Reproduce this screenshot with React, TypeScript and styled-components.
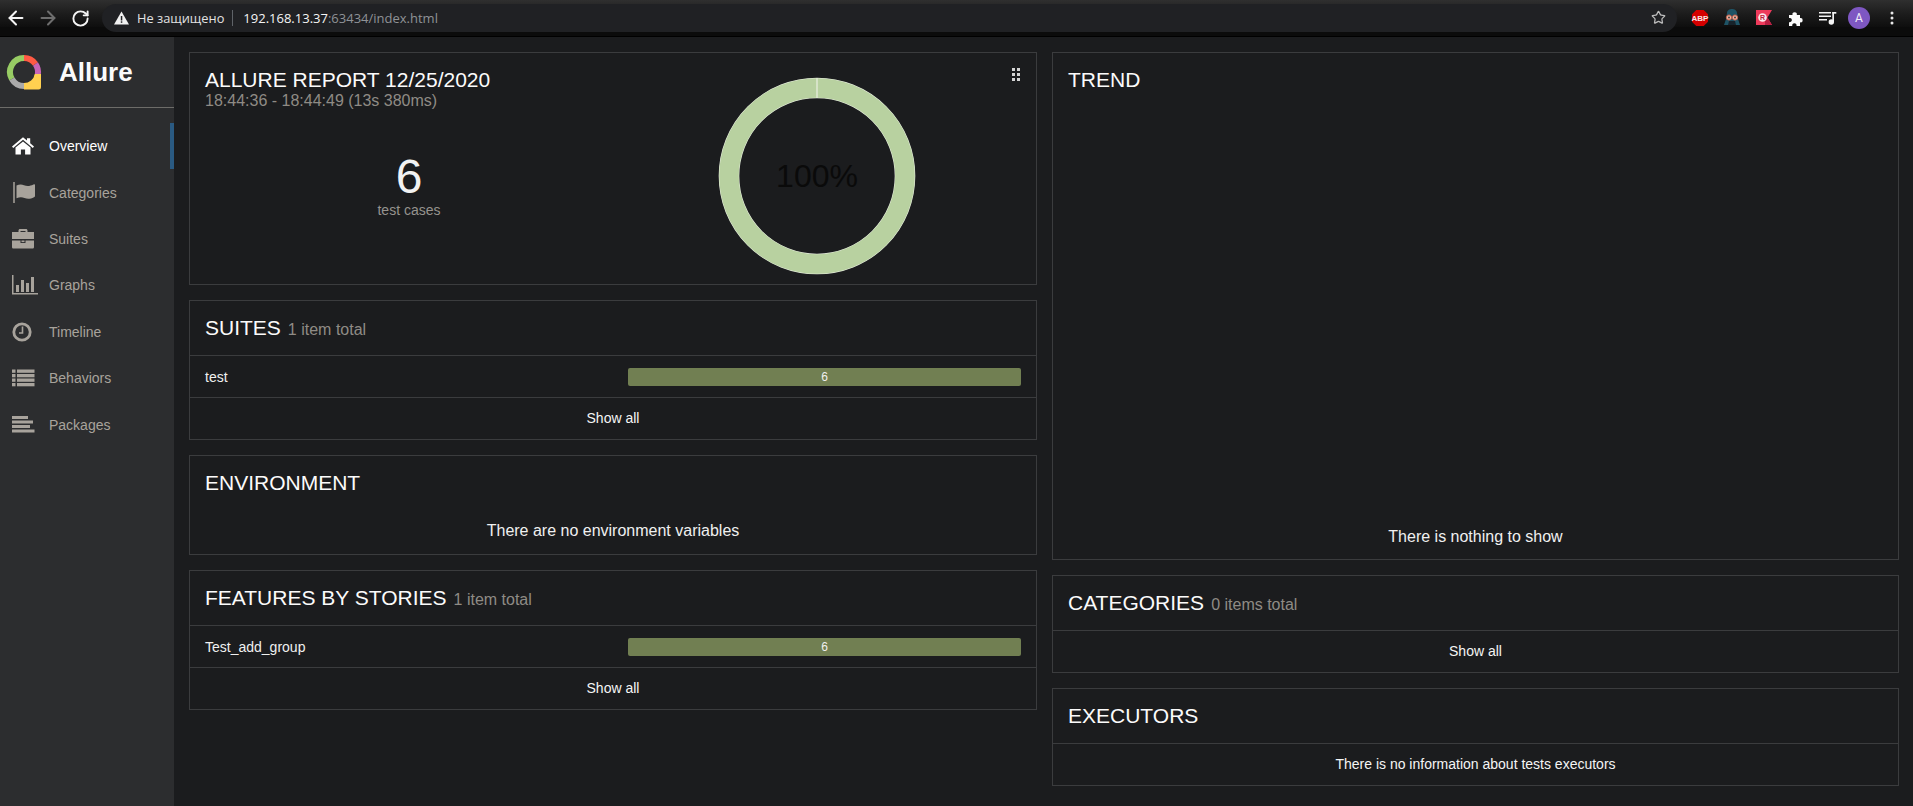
import React from "react";
import styled, { createGlobalStyle } from "styled-components";
import { ArrowLeft, ArrowRight, RotateCw, Star } from "lucide-react";

const Global = createGlobalStyle`
  html, body { margin: 0; padding: 0; height: 100%; background: #1b1c1e; overflow: hidden; }
  * { box-sizing: border-box; }
  #root { height: 100%; }
`;

const Page = styled.div`
  display: flex;
  flex-direction: column;
  height: 806px;
  font-family: "Liberation Sans", Arial, sans-serif;
  color: #f2f2f2;
  background: #1b1c1e;
`;

/* Browser chrome */
const BrowserBar = styled.div`
  display: flex;
  align-items: center;
  height: 37px;
  flex: none;
  padding-bottom: 1px;
  background: linear-gradient(#2f2f2f 0, #1c1c1c 14px, #0e0e0e 27px, #0b0b0b 27px, #0b0b0b 36px, #000 36px);
`;
const NavGroup = styled.div`
  display: flex;
  align-items: center;
  gap: 10px;
  padding-left: 5px;
  width: 102px;
  flex: none;
`;
const NavIcon = styled.span<{ $dim?: boolean }>`
  display: flex;
  width: 22px;
  justify-content: center;
  color: ${(p) => (p.$dim ? "#6e6e6e" : "#f4f4f4")};
`;
const Omnibox = styled.div`
  flex: 1;
  height: 28px;
  margin-top: -1px;
  display: flex;
  align-items: center;
  padding: 0 11px 0 12px;
  border-radius: 14px;
  background: #202124;
  font-family: "Open Sans", "Noto Sans", sans-serif;
  font-size: 13px;
`;
const Secure = styled.span`
  color: #e2e2e2;
  font-size: 12.8px;
  margin-left: 8px;
`;
const Divider = styled.span`
  width: 1px;
  height: 16px;
  background: #5f6368;
  margin: 0 10px 0 8px;
`;
const UrlHost = styled.span`
  color: #f5f5f5;
`;
const UrlRest = styled.span`
  color: #8f9296;
`;
const StarSlot = styled.span`
  margin-left: auto;
  display: flex;
  color: #bdbdbd;
`;
const Extensions = styled.div`
  width: 236px;
  flex: none;
  display: flex;
  align-items: center;
  height: 28px;
  padding-left: 11px;
  gap: 8px;
`;
const ExtSlot = styled.span`
  width: 24px;
  height: 24px;
  display: flex;
  align-items: center;
  justify-content: center;
  flex: none;
`;
const Avatar = styled.span`
  width: 22px;
  height: 22px;
  border-radius: 50%;
  background: #7e57c2;
  color: #f0ecf8;
  font-size: 12px;
  display: flex;
  align-items: center;
  justify-content: center;
  font-family: "Roboto", sans-serif;
  flex: none;
`;
const Kebab = styled.span`
  margin-left: 12px;
  display: flex;
`;

/* Layout */
const Body = styled.div`
  flex: 1;
  display: flex;
  min-height: 0;
`;
const Sidebar = styled.aside`
  width: 174px;
  flex: none;
  background: #2c2d2f;
`;
const Brand = styled.div`
  height: 71px;
  display: flex;
  align-items: center;
  padding-left: 6px;
  gap: 17px;
  border-bottom: 1px solid #6d6c69;
`;
const BrandName = styled.span`
  font-size: 26px;
  font-weight: 700;
  color: #fbfbfb;
`;
const Menu = styled.nav`
  padding-top: 15px;
  display: flex;
  flex-direction: column;
`;
const MenuItem = styled.div<{ $active?: boolean }>`
  height: 46.4px;
  display: flex;
  align-items: center;
  gap: 13px;
  padding-left: 12px;
  font-size: 14px;
  color: ${(p) => (p.$active ? "#ffffff" : "#a8a39c")};
  border-right: 4px solid ${(p) => (p.$active ? "#2a5a82" : "transparent")};
`;
const Content = styled.main`
  flex: 1;
  display: grid;
  grid-template-columns: 848px 847px;
  column-gap: 15px;
  padding: 15px 0 0 15px;
  align-items: start;
`;
const Column = styled.div`
  display: flex;
  flex-direction: column;
  gap: 15px;
`;
const Card = styled.section<{ $height?: number }>`
  position: relative;
  border: 1px solid #3b3c3e;
  ${(p) => (p.$height ? `height: ${p.$height}px;` : "")}
`;
const ReportCard = styled(Card)`
  display: grid;
  grid-template-columns: 408px 408px;
  padding: 0 15px;
`;
const ReportInfo = styled.div`
  padding-top: 15px;
`;
const Title = styled.h2`
  margin: 0;
  font-size: 21px;
  line-height: 24px;
  font-weight: 400;
  color: #fbfbfb;
`;
const Times = styled.div`
  margin-top: 1px;
  font-size: 16px;
  line-height: 16px;
  color: #8f8b85;
`;
const Stat = styled.div`
  margin-top: 43px;
  text-align: center;
`;
const StatValue = styled.div`
  font-size: 48px;
  line-height: 50px;
  color: #f2f2f2;
`;
const StatLabel = styled.div`
  font-size: 14px;
  line-height: 16px;
  color: #96938e;
`;
const DonutWrap = styled.div`
  position: relative;
  width: 200px;
  height: 200px;
  margin: 23px auto 0;
`;
const DonutLabel = styled.div`
  position: absolute;
  inset: 0;
  display: flex;
  align-items: center;
  justify-content: center;
  font-size: 32px;
  color: #0a0a0a;
`;
const DragHandle = styled.span`
  position: absolute;
  top: 15px;
  right: 15px;
  width: 10px;
  height: 13px;
  display: flex;
`;
const CardHeader = styled.header`
  height: 55px;
  display: flex;
  align-items: baseline;
  gap: 7px;
  padding: 15px 15px 0;
  border-bottom: 1px solid #3b3c3e;
`;
const CardHead = styled.div`
  padding: 15px 15px 0;
`;
const Count = styled.span`
  font-size: 16px;
  color: #8f8b85;
`;
const Row = styled.div`
  height: 42px;
  display: flex;
  align-items: center;
  padding: 0 15px;
  font-size: 14px;
  border-bottom: 1px solid #3b3c3e;
  color: #f0f0f0;
`;
const RowName = styled.span`
  flex: 1;
`;
const Bar = styled.div`
  width: 393px;
  height: 18px;
  border-radius: 2px;
  background: #717f52;
  display: flex;
  align-items: center;
  justify-content: center;
  color: #f0f0f0;
  font-size: 12px;
`;
const ShowAll = styled.div`
  height: 40px;
  display: flex;
  align-items: center;
  justify-content: center;
  font-size: 14px;
  color: #f5f5f5;
`;
const Empty = styled.div<{ $top?: number }>`
  text-align: center;
  font-size: 16px;
  line-height: 18px;
  color: #f0f0f0;
  padding-top: ${(p) => p.$top ?? 0}px;
`;
const TrendBody = styled.div`
  position: absolute;
  left: 0;
  right: 0;
  bottom: 13px;
`;

const polar = (cx: number, cy: number, r: number, deg: number) => {
  const a = ((deg - 90) * Math.PI) / 180;
  return [cx + r * Math.cos(a), cy + r * Math.sin(a)];
};
const arc = (cx: number, cy: number, r: number, from: number, to: number) => {
  const [x1, y1] = polar(cx, cy, r, from);
  const [x2, y2] = polar(cx, cy, r, to);
  return `M${x1} ${y1}A${r} ${r} 0 ${to - from > 180 ? 1 : 0} 1 ${x2} ${y2}`;
};

const Logo = () => (
  <svg width="36" height="36" viewBox="0 0 36 36" fill="none" strokeWidth="6">
    <path d={arc(18, 18, 14, 240, 360)} stroke="#97cc64" />
    <path d={arc(18, 18, 14, 0, 55)} stroke="#ff5a44" />
    <path d={arc(18, 18, 14, 55, 100)} stroke="#c765b7" />
    <path d={arc(18, 18, 14, 100, 180)} stroke="#ffd050" />
    <path d={arc(18, 18, 14, 180, 240)} stroke="#aaaaaa" />
    <path d="M29 20h6v13a2.5 2.5 0 0 1-2.5 2.5H18v-3.5A14 14 0 0 0 29 20Z" fill="#ffd050" />
  </svg>
);

const iconColor = "currentColor";
const HomeIcon = () => (
  <svg width="24" height="20" viewBox="1 0 24 20" fill={iconColor}>
    <path d="M1 10.5 12 1.2l4 3.4V2.2h3.2v5.1L23 10.5l-1.2 1.4L12 3.8 2.2 11.9Z" />
    <path d="M4.5 11.6 12 5.4l7.5 6.2V18.6h-5.4v-5.2H9.9v5.2H4.5Z" />
  </svg>
);
const FlagIcon = () => (
  <svg width="24" height="22" viewBox="0 0 24 22" fill={iconColor}>
    <rect x="1" y="0" width="2" height="21" opacity=".75" />
    <path d="M4.5 3.5c2.5-1.2 5-1.4 7.5-.3 3 1.3 6 1 9.5-.7 1-.4 1.5-.2 1.5.5V14c0 .6-.3 1-1 1.3-3.5 1.7-6.5 2-9.5.7-2.7-1.1-5.2-.9-8 .3Z" />
  </svg>
);
const CaseIcon = () => (
  <svg width="24" height="20" viewBox="1 0 24 20" fill={iconColor}>
    <path
      d="M7.5 3V1.5C7.5.7 8.2 0 9 0h6c.8 0 1.5.7 1.5 1.5V3H23v7H1V3Zm2-1v1h5V2Z"
      fillRule="evenodd"
    />
    <path d="M1 11.5h8.5V14h5v-2.5H23V18c0 1-.7 1.5-1.5 1.5h-19C1.7 19.500 1 19 1 18Z" />
    <rect x="10.5" y="11.5" width="3" height="1.6" />
  </svg>
);
const BarsIcon = () => (
  <svg width="26" height="20" viewBox="0 0 26 20" fill={iconColor} style={{ marginRight: -2 }}>
    <rect x="0" y="0" width="1.5" height="19" />
    <rect x="0" y="18" width="26" height="1.5" />
    <rect x="4" y="10" width="3" height="7" />
    <rect x="9" y="5" width="3" height="12" />
    <rect x="14" y="8" width="3" height="9" />
    <rect x="19" y="2" width="3" height="15" />
  </svg>
);
const ClockIcon = () => (
  <svg width="24" height="20" viewBox="0 0 24 20" fill="none" stroke={iconColor}>
    <circle cx="10" cy="10" r="8.2" strokeWidth="2.8" />
    <path d="M10.5 4.5V11H7" strokeWidth="1.6" />
  </svg>
);
const ListIcon = () => (
  <svg width="24" height="20" viewBox="0 0 24 20" fill={iconColor}>
    {[1.5, 6, 10.5, 15].map((y) => (
      <g key={y}>
        <rect x="0" y={y} width="3.5" height="3.3" />
        <rect x="5" y={y} width="17.5" height="3.3" />
      </g>
    ))}
  </svg>
);
const PackIcon = () => (
  <svg width="24" height="20" viewBox="0 0 24 20" fill={iconColor}>
    <rect x="0" y="1" width="16" height="3" />
    <rect x="0" y="5.5" width="21" height="3" />
    <rect x="0" y="10" width="18" height="3" />
    <rect x="0" y="14.5" width="22.5" height="3" />
  </svg>
);

const WarnIcon = () => (
  <svg width="15" height="14" viewBox="0 0 15 14">
    <path d="M7.5.5 15 13.5H0Z" fill="#f1f1f1" />
    <rect x="6.8" y="5" width="1.5" height="4.5" fill="#202124" />
    <rect x="6.8" y="10.3" width="1.5" height="1.5" fill="#202124" />
  </svg>
);
const AbpIcon = () => (
  <svg width="18" height="18" viewBox="0 0 18 18">
    <path d="M5.3 1h7.4L17 5.3v7.4L12.7 17H5.3L1 12.7V5.3Z" fill="#d40000" />
    <text x="9" y="11.8" textAnchor="middle" fontSize="8" fontWeight="700" fill="#f6e6e6" fontFamily="Liberation Sans, sans-serif">ABP</text>
  </svg>
);
const SpyIcon = () => (
  <svg width="18" height="18" viewBox="0 0 18 18">
    <path d="M4 4c0-2.5 2.5-4 5-4s5 1.5 5 4l1 6 2 6H1l2-6Z" fill="#1e5365" />
    <path d="M6 12h6l1 4H5Z" fill="#17232b" />
    <circle cx="6" cy="8.5" r="2.6" fill="#e9b7a6" stroke="#c9573f" strokeWidth=".9" />
    <circle cx="12" cy="8.5" r="2.6" fill="#e9b7a6" stroke="#c9573f" strokeWidth=".9" />
    <circle cx="6" cy="8.5" r=".9" fill="#333" />
    <circle cx="12" cy="8.5" r=".9" fill="#333" />
  </svg>
);
const RedIcon = () => (
  <svg width="18" height="18" viewBox="0 0 18 18">
    <path d="M1 1h16l-4.5 7.5L17 16H1Z" fill="#ee3a5b" />
    <path d="M10 16h7l-4.5-7.5L10 12Z" fill="#b92043" />
    <circle cx="7.5" cy="8.5" r="4.3" fill="#fbe8ec" />
    <text x="7.5" y="11" textAnchor="middle" fontSize="7" fontWeight="700" fill="#c41d3f" fontFamily="Liberation Sans, sans-serif">R</text>
  </svg>
);
const PuzzleIcon = () => (
  <svg width="16" height="16" viewBox="0 0 16 16" fill="#fafafa">
    <path d="M1 5h3.5a2.2 2.2 0 1 1 4.3 0H12v3a2.2 2.2 0 1 1 0 4.3V16H8.500a2.200 2.200 0 1 0-4.200 0H1v-3.800a2.200 2.200 0 1 0 0-4.200Z" />
  </svg>
);
const QueueIcon = () => (
  <svg width="18" height="14" viewBox="0 0 18 14" fill="#f4f4f4">
    <rect x="0" y="1" width="12" height="1.5" />
    <rect x="0" y="4.5" width="12" height="1.5" />
    <rect x="0" y="8" width="8" height="1.5" />
    <rect x="13.3" y="1" width="1.7" height="10" />
    <rect x="13.3" y="1" width="4" height="1.7" />
    <circle cx="12.3" cy="11" r="2.7" />
  </svg>
);
const KebabIcon = () => (
  <svg width="4" height="14" viewBox="0 0 4 14" fill="#e8e8e8">
    <circle cx="2" cy="2" r="1.5" />
    <circle cx="2" cy="7" r="1.5" />
    <circle cx="2" cy="12" r="1.5" />
  </svg>
);
const DotsIcon = () => (
  <svg width="10" height="13" viewBox="0 0 10 13" fill="#d4d4d4">
    {[0, 5, 10].map((y) => (
      <g key={y}>
        <rect x="1" y={y} width="3" height="3" />
        <rect x="6" y={y} width="3" height="3" />
      </g>
    ))}
  </svg>
);

const menu: [string, React.ReactNode][] = [
  ["Overview", <HomeIcon key="h" />],
  ["Categories", <FlagIcon key="f" />],
  ["Suites", <CaseIcon key="c" />],
  ["Graphs", <BarsIcon key="b" />],
  ["Timeline", <ClockIcon key="t" />],
  ["Behaviors", <ListIcon key="l" />],
  ["Packages", <PackIcon key="p" />],
];

const Section = ({ title, count, rows, height }: { title: string; count?: string; rows?: string; height?: number }) => (
  <Card $height={height}>
    <CardHeader>
      <Title>{title}</Title>
      {count && <Count>{count}</Count>}
    </CardHeader>
    {rows && (
      <Row>
        <RowName>{rows}</RowName>
        <Bar>6</Bar>
      </Row>
    )}
    <ShowAll>Show all</ShowAll>
  </Card>
);

export default function App() {
  return (
    <Page>
      <Global />
      <BrowserBar>
        <NavGroup>
          <NavIcon><ArrowLeft size={22} strokeWidth={2.2} /></NavIcon>
          <NavIcon $dim><ArrowRight size={22} strokeWidth={2.2} /></NavIcon>
          <NavIcon><RotateCw size={19} strokeWidth={2.4} /></NavIcon>
        </NavGroup>
        <Omnibox>
          <WarnIcon />
          <Secure>Не защищено</Secure>
          <Divider />
          <span>
            <UrlHost>192.168.13.37</UrlHost>
            <UrlRest>:63434/index.html</UrlRest>
          </span>
          <StarSlot><Star size={15} strokeWidth={2} /></StarSlot>
        </Omnibox>
        <Extensions>
          <ExtSlot><AbpIcon /></ExtSlot>
          <ExtSlot><SpyIcon /></ExtSlot>
          <ExtSlot><RedIcon /></ExtSlot>
          <ExtSlot><PuzzleIcon /></ExtSlot>
          <ExtSlot><QueueIcon /></ExtSlot>
          <Avatar>A</Avatar>
          <Kebab><KebabIcon /></Kebab>
        </Extensions>
      </BrowserBar>
      <Body>
        <Sidebar>
          <Brand>
            <Logo />
            <BrandName>Allure</BrandName>
          </Brand>
          <Menu>
            {menu.map(([label, icon], i) => (
              <MenuItem key={label} $active={i === 0}>
                {icon}
                <span>{label}</span>
              </MenuItem>
            ))}
          </Menu>
        </Sidebar>
        <Content>
          <Column>
            <ReportCard $height={233}>
              <ReportInfo>
                <Title>ALLURE REPORT 12/25/2020</Title>
                <Times>18:44:36 - 18:44:49 (13s 380ms)</Times>
                <Stat>
                  <StatValue>6</StatValue>
                  <StatLabel>test cases</StatLabel>
                </Stat>
              </ReportInfo>
              <DonutWrap>
                <svg width="200" height="200" viewBox="0 0 200 200">
                  <circle cx="100" cy="100" r="88" fill="none" stroke="#e8eee0" strokeWidth="20.6" />
                  <circle cx="100" cy="100" r="88" fill="none" stroke="#b8d1a0" strokeWidth="19.6" />
                  <rect x="99.3" y="2" width="1.4" height="20" fill="#e3ecd8" />
                </svg>
                <DonutLabel>100%</DonutLabel>
              </DonutWrap>
              <DragHandle><DotsIcon /></DragHandle>
            </ReportCard>
            <Section title="SUITES" count="1 item total" rows="test" height={140} />
            <Card $height={100}>
              <CardHead><Title>ENVIRONMENT</Title></CardHead>
              <Empty $top={27}>There are no environment variables</Empty>
            </Card>
            <Section title="FEATURES BY STORIES" count="1 item total" rows="Test_add_group" height={140} />
          </Column>
          <Column>
            <Card $height={508}>
              <CardHead><Title>TREND</Title></CardHead>
              <TrendBody><Empty>There is nothing to show</Empty></TrendBody>
            </Card>
            <Section title="CATEGORIES" count="0 items total" height={98} />
            <Card $height={98}>
              <CardHeader><Title>EXECUTORS</Title></CardHeader>
              <ShowAll>There is no information about tests executors</ShowAll>
            </Card>
          </Column>
        </Content>
      </Body>
    </Page>
  );
}
